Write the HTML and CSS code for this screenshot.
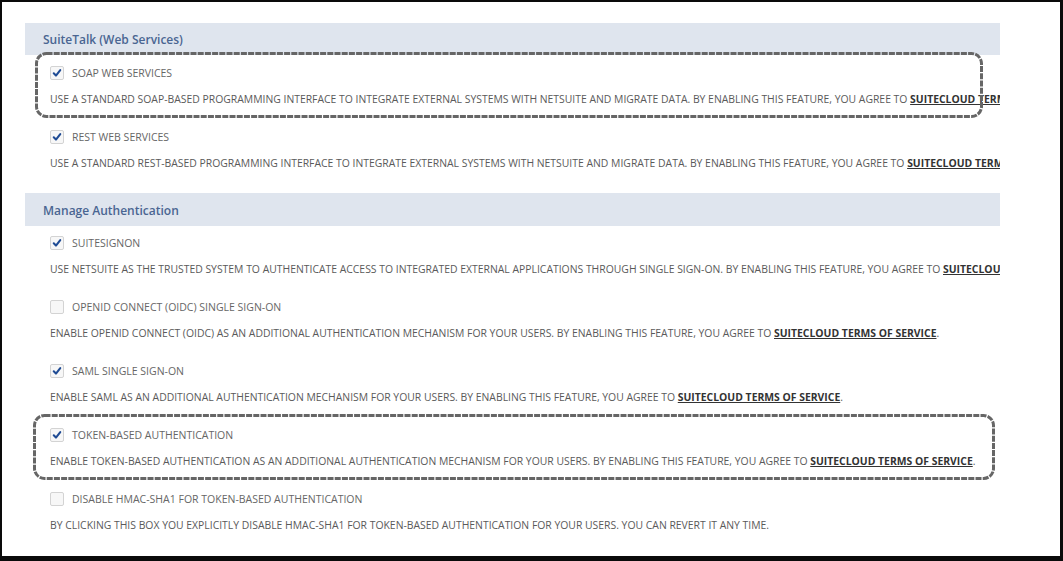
FILE: index.html
```html
<html>
  <head>
    <link rel="stylesheet" href="styles.css">
    <title>Enable Features - SuiteCloud</title>
  </head>
  <body>
    <div class="frame">
      <div class="panel">

        <div class="section-head">SuiteTalk (Web Services)</div>

        <div class="row">
          <label class="opt"><span class="box checked"><svg viewBox="0 0 14 14"><path d="M3.2 7.4 L5.8 10 L10.8 3.6"/></svg></span>SOAP WEB SERVICES</label>
          <div class="desc">USE A STANDARD SOAP-BASED PROGRAMMING INTERFACE TO INTEGRATE EXTERNAL SYSTEMS WITH NETSUITE AND MIGRATE DATA. BY ENABLING THIS FEATURE, YOU AGREE TO <a href="#">SUITECLOUD TERMS OF SERVICE</a>.</div>
        </div>

        <div class="row">
          <label class="opt"><span class="box checked"><svg viewBox="0 0 14 14"><path d="M3.2 7.4 L5.8 10 L10.8 3.6"/></svg></span>REST WEB SERVICES</label>
          <div class="desc">USE A STANDARD REST-BASED PROGRAMMING INTERFACE TO INTEGRATE EXTERNAL SYSTEMS WITH NETSUITE AND MIGRATE DATA. BY ENABLING THIS FEATURE, YOU AGREE TO <a href="#">SUITECLOUD TERMS OF SERVICE</a>.</div>
        </div>

        <div class="section-head second">Manage Authentication</div>

        <div class="row">
          <label class="opt"><span class="box checked"><svg viewBox="0 0 14 14"><path d="M3.2 7.4 L5.8 10 L10.8 3.6"/></svg></span>SUITESIGNON</label>
          <div class="desc">USE NETSUITE AS THE TRUSTED SYSTEM TO AUTHENTICATE ACCESS TO INTEGRATED EXTERNAL APPLICATIONS THROUGH SINGLE SIGN-ON. BY ENABLING THIS FEATURE, YOU AGREE TO <a href="#">SUITECLOUD TERMS OF SERVICE</a>.</div>
        </div>

        <div class="row">
          <label class="opt"><span class="box"></span>OPENID CONNECT (OIDC) SINGLE SIGN-ON</label>
          <div class="desc">ENABLE OPENID CONNECT (OIDC) AS AN ADDITIONAL AUTHENTICATION MECHANISM FOR YOUR USERS. BY ENABLING THIS FEATURE, YOU AGREE TO <a href="#">SUITECLOUD TERMS OF SERVICE</a>.</div>
        </div>

        <div class="row">
          <label class="opt"><span class="box checked"><svg viewBox="0 0 14 14"><path d="M3.2 7.4 L5.8 10 L10.8 3.6"/></svg></span>SAML SINGLE SIGN-ON</label>
          <div class="desc">ENABLE SAML AS AN ADDITIONAL AUTHENTICATION MECHANISM FOR YOUR USERS. BY ENABLING THIS FEATURE, YOU AGREE TO <a href="#">SUITECLOUD TERMS OF SERVICE</a>.</div>
        </div>

        <div class="row">
          <label class="opt"><span class="box checked"><svg viewBox="0 0 14 14"><path d="M3.2 7.4 L5.8 10 L10.8 3.6"/></svg></span>TOKEN-BASED AUTHENTICATION</label>
          <div class="desc">ENABLE TOKEN-BASED AUTHENTICATION AS AN ADDITIONAL AUTHENTICATION MECHANISM FOR YOUR USERS. BY ENABLING THIS FEATURE, YOU AGREE TO <a href="#">SUITECLOUD TERMS OF SERVICE</a>.</div>
        </div>

        <div class="row">
          <label class="opt"><span class="box"></span>DISABLE HMAC-SHA1 FOR TOKEN-BASED AUTHENTICATION</label>
          <div class="desc">BY CLICKING THIS BOX YOU EXPLICITLY DISABLE HMAC-SHA1 FOR TOKEN-BASED AUTHENTICATION FOR YOUR USERS. YOU CAN REVERT IT ANY TIME.</div>
        </div>

      </div>

      <!-- hand drawn highlights over the screenshot -->
      <svg class="mark mark-soap" viewBox="0 0 948 66" preserveAspectRatio="none"><rect x="1.5" y="1.5" width="945" height="63" rx="10"/></svg>
      <svg class="mark mark-token" viewBox="0 0 962 66" preserveAspectRatio="none"><rect x="1.5" y="1.5" width="959" height="63" rx="10"/></svg>
    </div>
  </body>
</html>
```

FILE: styles.css
```css
body{
  margin: 0;
  background: #fff;
  font-family: "Open Sans", "Liberation Sans", sans-serif;
}
.frame{
  position: relative;
  box-sizing: border-box;
  width: 1063px;
  height: 561px;
  border-style: solid;
  border-color: #0a0a0a;
  border-width: 2px 3px 5px 2px;
  padding: 21px 0 0 23px;
  overflow: hidden;
}
.panel{
  width: 975px;
  overflow: hidden;
  white-space: nowrap;
}
.section-head{
  height: 32px;
  line-height: 34px;
  background: #dfe5ee;
  color: #4a6592;
  font-size: 12px;
  font-weight: 600;
  padding-left: 18px;
  margin-bottom: 8px;
}
.section-head.second{
  margin-top: 20px;
  height: 33px;
  line-height: 36px;
  margin-bottom: 7px;
}
.row{
  padding-left: 25px;
  margin-bottom: 18px;
}
.opt{
  display: flex;
  align-items: center;
  height: 20px;
  font-size: 10.5px;
  color: #666;
}
.box{
  box-sizing: border-box;
  width: 14px;
  height: 14px;
  border: 1px solid #d3d3d3;
  border-radius: 2px;
  background: #f7f7f7;
  margin-right: 8px;
  display: inline-block;
}
.box svg{
  display: block;
  width: 12px;
  height: 12px;
}
.box svg path{
  fill: none;
  stroke: #1f4b94;
  stroke-width: 2.4;
  stroke-linecap: round;
  stroke-linejoin: round;
}
.desc{
  margin-top: 6px;
  height: 20px;
  line-height: 20px;
  font-size: 10.4px;
  color: #5a5a5a;
}
.desc a{
  color: #333;
  font-weight: bold;
  text-decoration: underline;
}
.mark{
  position: absolute;
  overflow: visible;
}
.mark rect{
  fill: none;
  stroke: #666;
  stroke-width: 3;
  stroke-dasharray: 6 1.2;
}
.mark-soap{
  left: 33px;
  top: 50px;
  width: 948px;
  height: 66px;
}
.mark-token{
  left: 31px;
  top: 412px;
  width: 962px;
  height: 66px;
}
```
